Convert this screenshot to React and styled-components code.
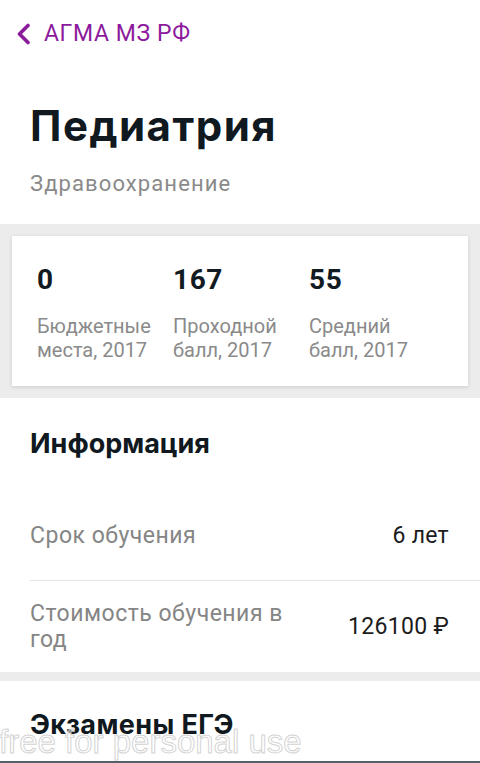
import React from "react";
import styled, { createGlobalStyle } from "styled-components";

const Global = createGlobalStyle`
  html, body { margin: 0; padding: 0; background: #ffffff; }
  body { font-family: Roboto, "Liberation Sans", sans-serif; overflow: hidden; }
  * { box-sizing: border-box; }
`;

const Page = styled.div`
  width: 480px;
  height: 763px;
  overflow: hidden;
  position: relative;
  background: #fff;
`;

const Header = styled.div`
  height: 68px;
  display: flex;
  align-items: center;
  padding-left: 16px;
  gap: 13px;
  color: #8c1a9c;
`;

const BackText = styled.span`
  font-family: Roboto, sans-serif;
  font-size: 23px;
  line-height: 26px;
  letter-spacing: 0.6px;
  color: #8c1a9c;
`;

const TitleBlock = styled.div`
  padding: 34px 30px 26px;
`;

const Title = styled.h1`
  margin: 0;
  font-family: Inter, "Liberation Sans", sans-serif;
  font-weight: 700;
  font-size: 42px;
  line-height: 48px;
  letter-spacing: 1.5px;
  color: #101820;
`;

const Subtitle = styled.div`
  margin-top: 20px;
  font-size: 22px;
  line-height: 28px;
  letter-spacing: 1.1px;
  color: #8a8a8a;
`;

const Band = styled.div`
  background: #ececec;
  padding: 12px;
`;

const StatsCard = styled.div`
  background: #fff;
  box-shadow: 0 1px 4px rgba(0, 0, 0, 0.14);
  padding: 28px 25px 24px;
  display: grid;
  grid-template-columns: repeat(3, 136px);
`;

const Stat = styled.div`
  display: flex;
  flex-direction: column;
`;

const StatValue = styled.div`
  font-family: Roboto, sans-serif;
  font-weight: 700;
  font-size: 28px;
  line-height: 32px;
  letter-spacing: 0.6px;
  color: #121a22;
`;

const StatLabel = styled.div`
  margin-top: 18px;
  font-size: 20px;
  line-height: 24px;
  color: #8a8a8a;
`;

const Section = styled.div`
  padding-top: ${(p) => p.$top}px;
`;

const SectionTitle = styled.h2`
  margin: 0;
  padding: 0 30px;
  font-family: Inter, "Liberation Sans", sans-serif;
  font-weight: 700;
  font-size: 27px;
  line-height: 34px;
  letter-spacing: ${(p) => p.$spacing || 0}px;
  color: #101820;
`;

const Rows = styled.div`
  margin-top: 30px;
  margin-left: 30px;
`;

const Row = styled.div`
  min-height: ${(p) => (p.$divider ? 90 : 91)}px;
  padding: 19px 31px 19px 0;
  display: flex;
  align-items: center;
  justify-content: space-between;
  border-bottom: ${(p) => (p.$divider ? "1px solid #e6e6e6" : "none")};
`;

const RowLabel = styled.div`
  max-width: 275px;
  font-size: 23px;
  line-height: 26px;
  letter-spacing: 0.5px;
  color: #858585;
`;

const RowValue = styled.div`
  font-size: 23px;
  line-height: 26px;
  letter-spacing: 0.3px;
  color: #1c1c1c;
  white-space: nowrap;
`;

const Divider = styled.div`
  height: 9px;
  background: #ececec;
`;

const Watermark = styled.div`
  position: absolute;
  left: -1px;
  bottom: 1px;
  font-family: "Liberation Sans", Arial, sans-serif;
  font-size: 33px;
  line-height: 40px;
  color: rgba(255, 255, 255, 0.55);
  -webkit-text-stroke: 1px rgba(200, 200, 200, 0.8);
  white-space: nowrap;
  pointer-events: none;
`;

const BottomEdge = styled.div`
  position: absolute;
  left: 0;
  right: 0;
  bottom: 0;
  height: 2px;
  background: #56606a;
`;

function Chevron() {
  return (
    <svg width="15" height="22" viewBox="0 0 15 22" fill="none">
      <path d="M12 2.5 L3.5 11 L12 19.5" stroke="#8c1a9c" strokeWidth="3.6" strokeLinecap="round" strokeLinejoin="round" />
    </svg>
  );
}

const stats = [
  { value: "0", label: ["Бюджетные", "места, 2017"] },
  { value: "167", label: ["Проходной", "балл, 2017"] },
  { value: "55", label: ["Средний", "балл, 2017"] },
];

export default function App() {
  return (
    <Page>
      <Global />
      <Header>
        <Chevron />
        <BackText>АГМА МЗ РФ</BackText>
      </Header>
      <TitleBlock>
        <Title>Педиатрия</Title>
        <Subtitle>Здравоохранение</Subtitle>
      </TitleBlock>
      <Band>
        <StatsCard>
          {stats.map((s) => (
            <Stat key={s.value}>
              <StatValue>{s.value}</StatValue>
              <StatLabel>
                {s.label[0]}
                <br />
                {s.label[1]}
              </StatLabel>
            </Stat>
          ))}
        </StatsCard>
      </Band>
      <Section $top={29}>
        <SectionTitle>Информация</SectionTitle>
        <Rows>
          <Row $divider>
            <RowLabel>Срок обучения</RowLabel>
            <RowValue>6 лет</RowValue>
          </Row>
          <Row>
            <RowLabel>Стоимость обучения в год</RowLabel>
            <RowValue>126100 ₽</RowValue>
          </Row>
        </Rows>
      </Section>
      <Divider />
      <Section $top={27}>
        <SectionTitle $spacing={0.4}>Экзамены ЕГЭ</SectionTitle>
      </Section>
      <Watermark>free for personal use</Watermark>
      <BottomEdge />
    </Page>
  );
}
